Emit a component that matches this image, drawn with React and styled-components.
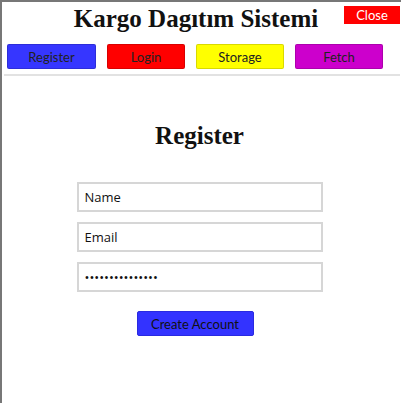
import React, {useState} from 'react';
import styled, {createGlobalStyle} from 'styled-components';

const GlobalStyle = createGlobalStyle`
    body {
        margin: 0;
        background: #fff;
        font-family: Lato, "Open Sans", sans-serif;
    }
`;

const Frame = styled.div`
    box-sizing: border-box;
    min-height: 403px;
    border-top: 2px solid #777;
    border-left: 2px solid #777;
    background: #fff;
`;

const Header = styled.header`
    display: grid;
    grid-template-columns: 1fr auto 1fr;
    align-items: start;
    padding: 4px 1px 0 0;
`;

const Title = styled.h1`
    grid-column: 2;
    margin: 0;
    font-family: "Liberation Serif", serif;
    font-size: 25px;
    font-weight: bold;
    color: #111;
    line-height: 26px;
    transform: translateX(-5px);
`;

const CloseButton = styled.button`
    grid-column: 3;
    justify-self: end;
    width: 56px;
    height: 18px;
    padding: 0;
    border: none;
    background: #ff0000;
    color: #fff;
    font-family: inherit;
    font-size: 13px;
    line-height: 18px;
`;

const Nav = styled.nav`
    display: flex;
    gap: 11px;
    padding: 12px 6px 0 5px;
`;

const NavButton = styled.button`
    width: ${props => props.$width}px;
    height: 25px;
    padding: 0;
    border: 1px solid rgba(0, 0, 0, 0.15);
    border-radius: 2px;
    background: ${props => props.color};
    color: #222;
    font-family: inherit;
    font-size: 13px;
`;

const Divider = styled.hr`
    margin: 5px 1px 0 2px;
    border: none;
    border-top: 2px solid #e2e2e2;
`;

const Form = styled.form`
    display: flex;
    flex-direction: column;
    align-items: center;
    padding: 47px 4px 0 0;
`;

const Heading = styled.h2`
    margin: 0 0 33px;
    font-family: "Liberation Serif", serif;
    font-size: 25px;
    font-weight: bold;
    color: #111;
    line-height: 26px;
`;

const Input = styled.input`
    box-sizing: border-box;
    width: 246px;
    height: 30px;
    margin-bottom: 10px;
    padding: 0 6px;
    border: 2px solid #d6d6d6;
    font-family: "Open Sans", sans-serif;
    font-size: 13px;
    color: #111;
    outline: none;
`;

const SubmitButton = styled.button`
    width: 117px;
    height: 25px;
    margin: 9px 9px 0 0;
    padding: 0;
    border: 1px solid #2a2ae0;
    border-radius: 2px;
    background: #3333ff;
    color: #111;
    font-family: inherit;
    font-size: 13px;
`;

const tabs = [
    {label: 'Register', color: '#3636ff', width: 89},
    {label: 'Login', color: '#ff0000', width: 78},
    {label: 'Storage', color: '#ffff00', width: 88},
    {label: 'Fetch', color: '#cc00cc', width: 88}
];

export default function App() {
    const [form, setForm] = useState({name: 'Name', email: 'Email', password: 'sifre1234567890'});

    const onChange = (e) => {
        setForm({...form, [e.target.name]: e.target.value});
    };

    return (
        <>
            <GlobalStyle/>
            <Frame>
                <Header>
                    <Title>Kargo Dagıtım Sistemi</Title>
                    <CloseButton>Close</CloseButton>
                </Header>
                <Nav>
                    {tabs.map(tab => (
                        <NavButton key={tab.label} color={tab.color} $width={tab.width}>{tab.label}</NavButton>
                    ))}
                </Nav>
                <Divider/>
                <Form onSubmit={e => e.preventDefault()}>
                    <Heading>Register</Heading>
                    <Input name="name" value={form.name} onChange={onChange}/>
                    <Input name="email" value={form.email} onChange={onChange}/>
                    <Input name="password" type="password" value={form.password} onChange={onChange}/>
                    <SubmitButton type="submit">Create Account</SubmitButton>
                </Form>
            </Frame>
        </>
    );
}
